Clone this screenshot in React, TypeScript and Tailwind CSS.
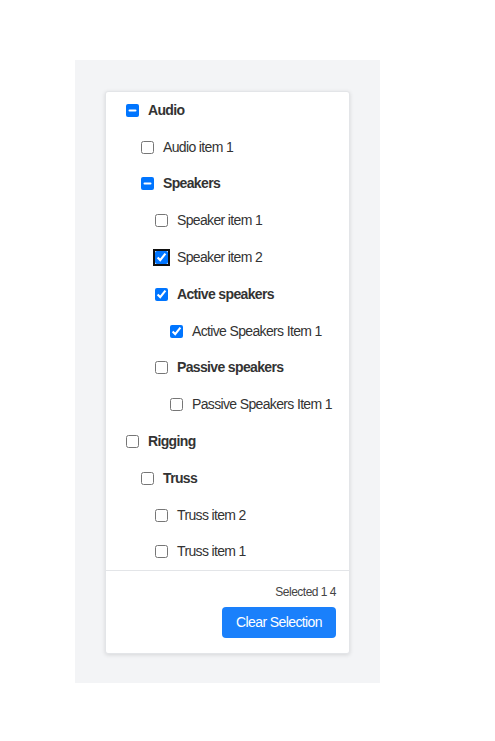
import React, { useEffect, useRef } from "react";

type Row = {
  label: string;
  level: number;
  bold?: boolean;
  checked?: boolean;
  indeterminate?: boolean;
  focused?: boolean;
};

const rows: Row[] = [
  { label: "Audio", level: 0, bold: true, indeterminate: true },
  { label: "Audio item 1", level: 1 },
  { label: "Speakers", level: 1, bold: true, indeterminate: true },
  { label: "Speaker item 1", level: 2 },
  { label: "Speaker item 2", level: 2, checked: true, focused: true },
  { label: "Active speakers", level: 2, bold: true, checked: true },
  { label: "Active Speakers Item 1", level: 3, checked: true },
  { label: "Passive speakers", level: 2, bold: true },
  { label: "Passive Speakers Item 1", level: 3 },
  { label: "Rigging", level: 0, bold: true },
  { label: "Truss", level: 1, bold: true },
  { label: "Truss item 2", level: 2 },
  { label: "Truss item 1", level: 2 },
];

const padByLevel = ["pl-[20px]", "pl-[35px]", "pl-[49px]", "pl-[64px]"];

function Check({ row }: { row: Row }) {
  const ref = useRef<HTMLInputElement>(null);
  useEffect(() => {
    if (ref.current) ref.current.indeterminate = !!row.indeterminate;
  }, [row.indeterminate]);
  return (
    <input
      ref={ref}
      type="checkbox"
      defaultChecked={row.checked}
      className={
        "m-0 w-[13px] h-[13px] shrink-0 " +
        (row.focused ? "outline-2 outline-offset-0 outline-[#101010] rounded-[2px]" : "")
      }
    />
  );
}

export default function App() {
  return (
    <div className="min-h-screen bg-white pt-[60px] pl-[75px]" style={{ fontFamily: '"Liberation Sans", Arial, sans-serif' }}>
      <div className="w-[305px] h-[623px] bg-[#f3f4f6] pt-[31px] px-[30px]">
        <div className="w-[245px] bg-white border border-[#e3e5e8] rounded-[3px] shadow-[0_1px_4px_rgba(0,0,0,0.12)]">
          <div className="flex flex-col">
            {rows.map((r, i) => (
              <label
                key={i}
                className={"flex items-center h-[36.8px] text-[14px] tracking-[-0.65px] text-[#333] " + padByLevel[r.level]}
              >
                <Check row={r} />
                <span className={(r.bold ? "font-bold ml-[9px]" : "ml-[9px]")}>{r.label}</span>
              </label>
            ))}
          </div>
          <div className="border-t border-[#e3e5e8] pt-[13px] pb-[15px] pr-[13px] flex flex-col items-end gap-[7px]">
            <div className="text-[12px] leading-[16px] tracking-[-0.5px] text-[#444]">Selected 1 4</div>
            <button className="h-[31px] px-[14px] bg-[#1a80fb] text-white text-[14px] tracking-[-0.6px] rounded-[4px]">
              Clear Selection
            </button>
          </div>
        </div>
      </div>
    </div>
  );
}
